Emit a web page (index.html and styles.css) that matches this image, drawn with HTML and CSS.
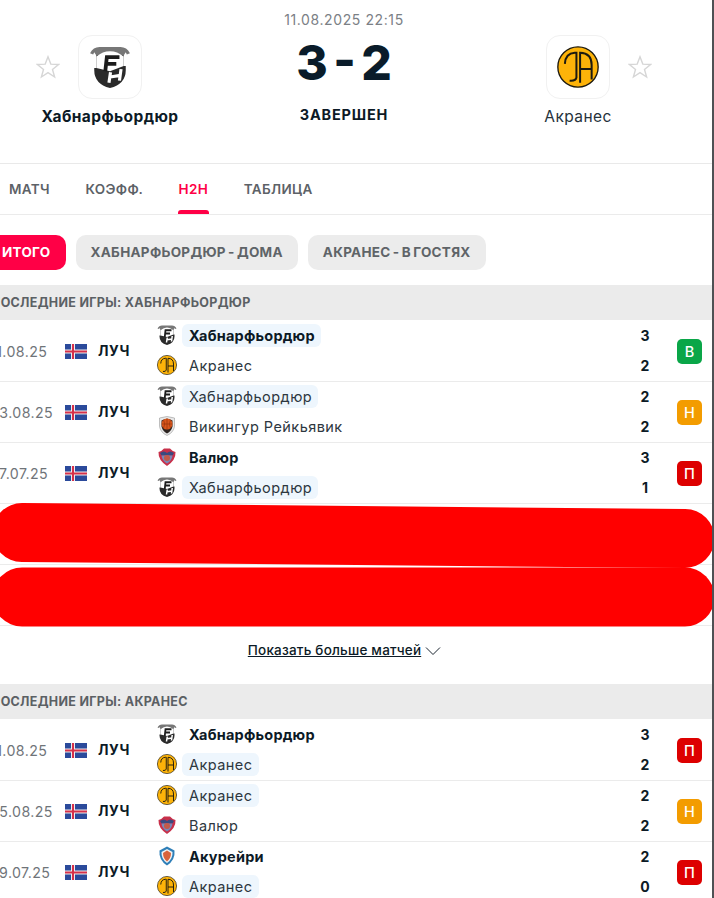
FILE: index.html
```html
<!DOCTYPE html>
<html lang="ru">
<head>
    <meta charset="UTF-8">
    <title>Хабнарфьордюр - Акранес</title>
    <link rel="stylesheet" href="styles.css">
</head>
<body>
    <svg class="defs" width="0" height="0" aria-hidden="true">
        <symbol id="logo-hab" viewBox="0 0 40 40">
            <path d="M7 21 L7 5 L33 5 L33 19 L35 19 L35 23 Q35 36 20 40 Q5 36 5 23 L5 21 Z" fill="#2a2a2a"/>
            <path d="M1 7 Q4 1 10 1 L30 1 Q36 1 39 7 L36 8 L35 6 L33 9 Q20 3 7 9 L5 6 L4 8 Z" fill="#777"/>
            <path d="M7 21 L7 10 Q13 5 20 5 Q27 5 33 10 L33 19 L20 24 Z" fill="#fff"/>
            <path d="M15.5 24 L17 10.5 L29 10.5 M16.5 17 L26 17" fill="none" stroke="#1c1c1c" stroke-width="3.6"/>
            <path d="M19 35 L20.5 25 M29 33 L30.5 22 M20 29.5 L30 28" fill="none" stroke="#fff" stroke-width="3"/>
        </symbol>
        <symbol id="logo-ia" viewBox="0 0 40 40">
            <circle cx="20" cy="20" r="19.2" fill="#fdb309" stroke="#1d1a10" stroke-width="1.3"/>
            <path d="M7.5 17 Q8 7 17 6.5 L18.5 6.5 L18.5 30 Q18 33.5 12 33" fill="none" stroke="#1d1a10" stroke-width="1.9"/>
            <path d="M22 35 L22 6.5 Q33 7 33 18 L33 32 M22 22 L33 22" fill="none" stroke="#1d1a10" stroke-width="1.9"/>
        </symbol>
        <symbol id="logo-vik" viewBox="0 0 40 40">
            <path d="M5 4 Q20 -2 35 4 L35 21 Q33 33 20 39 Q7 33 5 21 Z" fill="#e8e8e8" stroke="#888" stroke-width="1"/>
            <path d="M9 9 Q20 2 31 9 L31 21 Q29 30 20 35 Q11 30 9 21 Z" fill="#2c2420"/>
            <circle cx="20" cy="16" r="11" fill="#d8561c"/>
            <path d="M10 16 L30 16 M20 5 L20 27 M13 8 Q18 16 13 24 M27 8 Q22 16 27 24" stroke="#8f2f0c" stroke-width="1.2" fill="none"/>
        </symbol>
        <symbol id="logo-val" viewBox="0 0 40 40">
            <path d="M3 10 Q10 8 14 3 L26 3 Q30 8 37 10 Q38 26 20 38 Q2 26 3 10 Z" fill="#c8304a"/>
            <path d="M6 12 Q14 6 20 12 Q26 6 34 12 L31 17 L9 17 Z" fill="#3a4a80"/>
            <path d="M9 17 L31 17 Q30 27 20 33 Q10 27 9 17 Z" fill="#7a88b8"/>
            <circle cx="20" cy="22" r="6" fill="#c25a4a"/>
        </symbol>
        <symbol id="logo-aku" viewBox="0 0 40 40">
            <path d="M20 1 L35 9 Q37 28 20 39 Q3 28 5 9 Z" fill="#2f7fb8"/>
            <path d="M20 6 L31 12 Q32 26 20 34 Q8 26 9 12 Z" fill="#f2f2f2"/>
            <path d="M20 9 L28 14 Q28 25 20 31 Q12 25 12 14 Z" fill="#d9633c"/>
        </symbol>
        <symbol id="flag-is" viewBox="0 0 22 15">
            <rect width="22" height="15" fill="#2b4a9b"/>
            <rect x="6" width="4" height="15" fill="#eee"/>
            <rect y="5.5" width="22" height="4" fill="#eee"/>
            <rect x="7" width="2" height="15" fill="#d6304a"/>
            <rect y="6.5" width="22" height="2" fill="#d6304a"/>
        </symbol>
        <symbol id="star" viewBox="0 0 24 24">
            <path d="M12 1.8 L14.8 9.1 L22.6 9.5 L16.5 14.4 L18.6 22 L12 17.7 L5.4 22 L7.5 14.4 L1.4 9.5 L9.2 9.1 Z" fill="none" stroke="#d6d6d6" stroke-width="1.4"/>
        </symbol>
    </svg>

    <div class="page">
        <!-- match header -->
        <header class="match-head">
            <div class="team team-home">
                <div class="team-top">
                    <svg class="star"><use href="#star"/></svg>
                    <div class="crest-box"><svg class="crest"><use href="#logo-hab"/></svg></div>
                </div>
                <div class="team-name bold">Хабнарфьордюр</div>
            </div>
            <div class="result">
                <div class="match-date">11.08.2025 22:15</div>
                <div class="score">3 - 2</div>
                <div class="status">ЗАВЕРШЕН</div>
            </div>
            <div class="team team-away">
                <div class="team-top">
                    <div class="crest-box"><svg class="crest"><use href="#logo-ia"/></svg></div>
                    <svg class="star"><use href="#star"/></svg>
                </div>
                <div class="team-name">Акранес</div>
            </div>
        </header>

        <nav class="tabs">
            <a class="tab">МАТЧ</a>
            <a class="tab">КОЭФФ.</a>
            <a class="tab tab-active">H2H</a>
            <a class="tab">ТАБЛИЦА</a>
        </nav>

        <div class="pills">
            <a class="pill pill-active">ИТОГО</a>
            <a class="pill">ХАБНАРФЬОРДЮР - ДОМА</a>
            <a class="pill">АКРАНЕС - В ГОСТЯХ</a>
        </div>

        <section class="games">
            <h3 class="games-title">ПОСЛЕДНИЕ ИГРЫ: ХАБНАРФЬОРДЮР</h3>

            <div class="game">
                <span class="game-date">11.08.25</span>
                <svg class="flag"><use href="#flag-is"/></svg>
                <span class="league">ЛУЧ</span>
                <div class="sides">
                    <div class="side"><svg class="mini"><use href="#logo-hab"/></svg><span class="side-name mark bold">Хабнарфьордюр</span><span class="goals">3</span></div>
                    <div class="side"><svg class="mini"><use href="#logo-ia"/></svg><span class="side-name">Акранес</span><span class="goals">2</span></div>
                </div>
                <span class="badge win">В</span>
            </div>
            <div class="game">
                <span class="game-date">03.08.25</span>
                <svg class="flag"><use href="#flag-is"/></svg>
                <span class="league">ЛУЧ</span>
                <div class="sides">
                    <div class="side"><svg class="mini"><use href="#logo-hab"/></svg><span class="side-name mark">Хабнарфьордюр</span><span class="goals">2</span></div>
                    <div class="side"><svg class="mini"><use href="#logo-vik"/></svg><span class="side-name">Викингур Рейкьявик</span><span class="goals">2</span></div>
                </div>
                <span class="badge draw">Н</span>
            </div>
            <div class="game">
                <span class="game-date">27.07.25</span>
                <svg class="flag"><use href="#flag-is"/></svg>
                <span class="league">ЛУЧ</span>
                <div class="sides">
                    <div class="side"><svg class="mini"><use href="#logo-val"/></svg><span class="side-name bold">Валюр</span><span class="goals">3</span></div>
                    <div class="side"><svg class="mini"><use href="#logo-hab"/></svg><span class="side-name mark">Хабнарфьордюр</span><span class="goals">1</span></div>
                </div>
                <span class="badge lose">П</span>
            </div>
            <div class="game game-blank"></div>
            <div class="game game-blank"></div>

            <a class="more">
                <span class="more-text">Показать больше матчей</span>
                <svg class="chevron" viewBox="0 0 16 10"><path d="M1 1.5 L8 8.5 L15 1.5" fill="none" stroke="#1b2530" stroke-width="1"/></svg>
            </a>
        </section>

        <section class="games">
            <h3 class="games-title">ПОСЛЕДНИЕ ИГРЫ: АКРАНЕС</h3>

            <div class="game">
                <span class="game-date">11.08.25</span>
                <svg class="flag"><use href="#flag-is"/></svg>
                <span class="league">ЛУЧ</span>
                <div class="sides">
                    <div class="side"><svg class="mini"><use href="#logo-hab"/></svg><span class="side-name bold">Хабнарфьордюр</span><span class="goals">3</span></div>
                    <div class="side"><svg class="mini"><use href="#logo-ia"/></svg><span class="side-name mark">Акранес</span><span class="goals">2</span></div>
                </div>
                <span class="badge lose">П</span>
            </div>
            <div class="game">
                <span class="game-date">05.08.25</span>
                <svg class="flag"><use href="#flag-is"/></svg>
                <span class="league">ЛУЧ</span>
                <div class="sides">
                    <div class="side"><svg class="mini"><use href="#logo-ia"/></svg><span class="side-name mark">Акранес</span><span class="goals">2</span></div>
                    <div class="side"><svg class="mini"><use href="#logo-val"/></svg><span class="side-name">Валюр</span><span class="goals">2</span></div>
                </div>
                <span class="badge draw">Н</span>
            </div>
            <div class="game">
                <span class="game-date">29.07.25</span>
                <svg class="flag"><use href="#flag-is"/></svg>
                <span class="league">ЛУЧ</span>
                <div class="sides">
                    <div class="side"><svg class="mini"><use href="#logo-aku"/></svg><span class="side-name bold">Акурейри</span><span class="goals">2</span></div>
                    <div class="side"><svg class="mini"><use href="#logo-ia"/></svg><span class="side-name mark">Акранес</span><span class="goals">0</span></div>
                </div>
                <span class="badge lose">П</span>
            </div>
        </section>

        <!-- red marker strokes over the hidden rows -->
        <svg class="scribble" viewBox="0 0 714 898">
            <line x1="22" y1="532.5" x2="685" y2="538.5"/>
            <line x1="22" y1="597" x2="685" y2="597"/>
        </svg>
    </div>
</body>
</html>
```

FILE: styles.css
```css
html, body {
    margin: 0;
    height: 100%;
    overflow: hidden;
    background: #fff;
}

body {
    color: #0c1a26;
    font-family: Inter, "Noto Sans", sans-serif;
}

.defs {
    position: absolute;
}

.page {
    position: relative;
    width: 712px;
    height: 898px;
    overflow: hidden;
    border-right: 2px solid #4f5154;
}

/* Header */
.match-head {
    display: grid;
    grid-template-columns: 220px 1fr 244px;
    height: 163px;
    border-bottom: 1px solid #e9e9e9;
}

.team {
    padding-top: 35px;
}

.team-top {
    display: flex;
    align-items: center;
    height: 64px;
}

.team-home .team-top {
    padding-left: 36px;
    gap: 18px;
}

.team-away .team-top {
    padding-left: 78px;
    gap: 18px;
}

.star {
    width: 24px;
    height: 24px;
}

.crest-box {
    display: flex;
    align-items: center;
    justify-content: center;
    width: 62px;
    height: 62px;
    border: 1px solid #f1f1f1;
    border-radius: 14px;
}

.crest {
    width: 42px;
    height: 42px;
}

.team-name {
    margin-top: 8px;
    font-size: 15.5px;
    line-height: 20px;
    letter-spacing: 0.4px;
    color: #26323c;
}

.team-home .team-name {
    width: 220px;
    text-align: center;
}

.team-away .team-name {
    width: 220px;
    text-align: center;
}

.team-name.bold {
    color: #0c1a26;
    font-weight: 700;
}

.result {
    display: flex;
    flex-direction: column;
    align-items: center;
    padding-top: 11px;
}

.match-date {
    font-size: 14px;
    line-height: 18px;
    letter-spacing: 0.6px;
    color: #7b8085;
}

.score {
    margin-top: 7px;
    font-size: 48px;
    font-weight: 800;
    line-height: 54px;
    word-spacing: -5px;
    color: #0a1c2a;
}

.status {
    margin-top: 16px;
    font-size: 14.5px;
    font-weight: 700;
    line-height: 18px;
    letter-spacing: 0.8px;
}

/* Tabs */
.tabs {
    display: flex;
    gap: 35.5px;
    height: 50px;
    padding-left: 9px;
    border-bottom: 1px solid #ebebeb;
}

.tab {
    position: relative;
    font-size: 13.5px;
    font-weight: 600;
    line-height: 50px;
    letter-spacing: 0.35px;
    color: #5d6267;
}

.tab-active {
    color: #ff0046;
}

.tab-active::after {
    content: "";
    position: absolute;
    left: -1px;
    right: -1px;
    bottom: 0;
    height: 4px;
    border-radius: 3px 3px 0 0;
    background: #ff0046;
}

/* Pills */
.pills {
    display: flex;
    gap: 10px;
    margin-left: -18px;
    padding: 20px 0 15px;
}

.pill {
    padding: 0 15px;
    font-size: 13.5px;
    font-weight: 700;
    line-height: 35px;
    letter-spacing: 0.28px;
    word-spacing: -1.2px;
    color: #5f6468;
    background: #ececec;
    border-radius: 10px;
    white-space: nowrap;
}

.pill-active {
    padding-left: 20px;
    color: #fff;
    background: #ff0046;
}

/* Game lists */
.games-title {
    margin: 0 0 1px -9px;
    height: 35px;
    font-size: 12.5px;
    font-weight: 700;
    line-height: 35px;
    letter-spacing: 0.3px;
    color: #5b6064;
    background: #ebebeb;
    box-shadow: 9px 0 0 #ebebeb;
    white-space: nowrap;
}

.game {
    display: flex;
    align-items: center;
    height: 60px;
    border-bottom: 1px solid #ebebeb;
}

.game-date {
    flex: none;
    width: 57px;
    margin-left: -10px;
    margin-right: 18px;
    font-size: 14.2px;
    letter-spacing: 0.4px;
    text-align: right;
    color: #6f7479;
}

.flag {
    flex: none;
    width: 22px;
    height: 15px;
    margin-right: 11px;
}

.league {
    flex: none;
    width: 59px;
    padding-bottom: 1px;
    font-size: 14px;
    font-weight: 700;
    letter-spacing: 0.6px;
}

.sides {
    flex: 1;
    display: flex;
    flex-direction: column;
    gap: 7px;
    margin-top: -2px;
}

.side {
    display: flex;
    align-items: center;
    height: 23px;
    padding-right: 24px;
}

.mini {
    flex: none;
    width: 20px;
    height: 20px;
    margin-right: 5px;
}

.side-name {
    padding: 0 6px 0 7px;
    font-size: 14.5px;
    line-height: 23px;
    letter-spacing: 0.45px;
    color: #2d3740;
    border-radius: 6px;
}

.side-name.bold {
    font-weight: 700;
    letter-spacing: 0.2px;
    color: #0c1a26;
}

.mark {
    background: #eef6fd;
}

.goals {
    margin-left: auto;
    width: 16px;
    font-size: 14px;
    font-weight: 700;
    text-align: center;
}

.badge {
    flex: none;
    width: 25px;
    height: 25px;
    margin-right: 10px;
    font-size: 14.5px;
    font-weight: 500;
    line-height: 25px;
    text-align: center;
    color: #fff;
    border-radius: 5px;
}

.win { background: #0aa648; }
.draw { background: #f39c00; }
.lose { background: #dd0000; }

.more {
    display: flex;
    align-items: center;
    justify-content: center;
    gap: 4px;
    height: 47px;
    padding-bottom: 11px;
    margin-left: -23px;
}

.more-text {
    font-size: 13.5px;
    font-weight: 500;
    letter-spacing: 0.2px;
    text-decoration: underline;
}

.chevron {
    width: 16px;
    height: 10px;
    margin-top: 2px;
}

/* Marker strokes */
.scribble {
    position: absolute;
    top: 0;
    left: 0;
    width: 714px;
    height: 898px;
    pointer-events: none;
}

.scribble line {
    stroke: #ff0000;
    stroke-width: 59;
    stroke-linecap: round;
}
```
